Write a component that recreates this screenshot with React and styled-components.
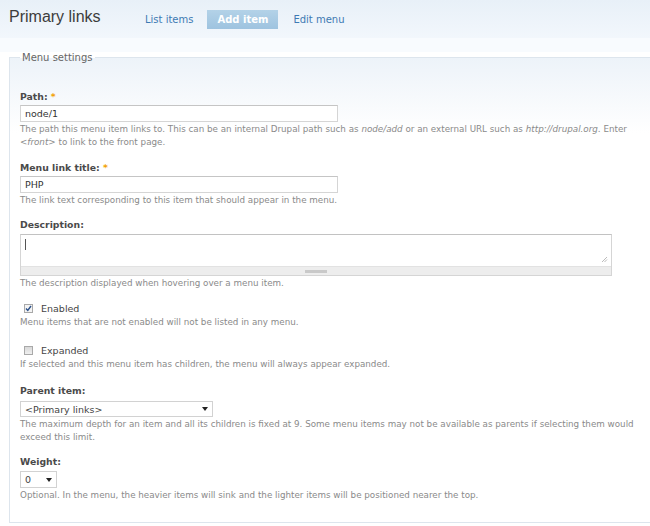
import React from "react";
import styled, { createGlobalStyle } from "styled-components";

const Global = createGlobalStyle`
  html, body { margin: 0; padding: 0; background: #fff; }
  body { font-family: "DejaVu Sans", Verdana, sans-serif; color: #444; overflow: hidden; }
`;

const Page = styled.div`
  width: 650px;
  height: 526px;
  overflow: hidden;
  background: #fff;
`;

const Header = styled.div`
  height: 38px;
  display: flex;
  align-items: center;
  padding-left: 9px;
  background: linear-gradient(#e8f0f8, #f2f7fc);
  box-sizing: border-box;
`;

const Title = styled.h1`
  margin: 0 0 4px 0;
  font-family: "Liberation Sans", Arial, sans-serif;
  font-weight: normal;
  font-size: 16px;
  color: #3c3c3c;
  width: 128px;
`;

const Tabs = styled.div`
  display: flex;
  align-items: center;
`;

const Tab = styled.a`
  display: inline-flex;
  align-items: center;
  height: 19px;
  padding: 0 ${(p) => (p.$active ? 10 : 8)}px;
  font-size: 10px;
  text-decoration: none;
  color: ${(p) => (p.$active ? "#fff" : "#3e7ab3")};
  font-weight: ${(p) => (p.$active ? "bold" : "normal")};
  background: ${(p) => (p.$active ? "linear-gradient(#b3d2e8, #9ec3df)" : "transparent")};
  margin-left: ${(p) => p.$ml || 0}px;
`;

const Band = styled.div`
  height: 14px;
  background: #f8fbfe;
`;

const Fieldset = styled.fieldset`
  margin: 0 0 0 9px;
  padding: 27px 10px 20px 10px;
  border: 1px solid #dde5ed;
  border-right: none;
  width: 700px;
  box-sizing: border-box;
  background: linear-gradient(#edf3f9 0px, #ffffff 75px);
`;

const Legend = styled.legend`
  padding: 0 2px;
  font-size: 10px;
  color: #666;
`;

const Item = styled.div`
  margin-top: ${(p) => p.$mt ?? 12}px;
`;

const Label = styled.div`
  font-size: 9.3px;
  font-weight: bold;
  color: #4a4a4a;
  line-height: 14px;
  margin-bottom: ${(p) => p.$mb ?? 1}px;
`;

const Star = styled.span`
  color: #f2a100;
`;

const TextInput = styled.div`
  width: 318px;
  height: 17px;
  box-sizing: border-box;
  border: 1px solid #d5d5d5;
  border-top-color: #c5c5c5;
  background: #fff;
  font-size: 9.5px;
  line-height: 15px;
  padding-left: 4px;
  color: #333;
`;

const Desc = styled.div`
  font-size: 8.75px;
  line-height: 13px;
  color: #8a8a8a;
  margin-top: 1px;
  width: 622px;
  em { font-style: italic; }
`;

const TextArea = styled.div`
  width: 592px;
  box-sizing: border-box;
  border: 1px solid #d5d5d5;
  border-top-color: #c2c2c2;
  background: #fff;
`;

const TextAreaBody = styled.div`
  height: 31px;
  position: relative;
  padding: 4px 0 0 4px;
  box-sizing: border-box;
`;

const Caret = styled.div`
  width: 1px;
  height: 11px;
  background: #555;
`;

const Corner = styled.svg`
  position: absolute;
  right: 3px;
  bottom: 3px;
`;

const Grip = styled.div`
  height: 8px;
  background: #ededed;
  border-top: 1px solid #e2e2e2;
  display: flex;
  align-items: center;
  justify-content: center;
`;

const GripHandle = styled.div`
  width: 22px;
  height: 3px;
  background: #c9c9c9;
`;

const CheckRow = styled.div`
  display: flex;
  align-items: center;
  height: 14px;
  padding-left: 4px;
`;

const Box = styled.span`
  width: 9px;
  height: 9px;
  box-sizing: border-box;
  border: 1px solid #a9a9a9;
  background: ${(p) => (p.$checked ? "#f4f4f4" : "linear-gradient(#d8d8d8, #f0f0f0)")};
  display: inline-flex;
  align-items: center;
  justify-content: center;
  margin-right: 8px;
`;

const CheckLabel = styled.span`
  font-size: 9.5px;
  color: #444;
`;

const Select = styled.div`
  width: ${(p) => p.$w}px;
  height: ${(p) => p.$h}px;
  box-sizing: border-box;
  border: 1px solid #d2d2d2;
  background: #fff;
  display: flex;
  align-items: center;
  justify-content: space-between;
  padding: 0 4px 0 4px;
  font-size: 9.5px;
  color: #444;
`;

const Arrow = styled.span`
  width: 0;
  height: 0;
  border-left: 3px solid transparent;
  border-right: 3px solid transparent;
  border-top: 4px solid #222;
`;

export default function App() {
  return (
    <Page>
      <Global />
      <Header>
        <Title>Primary links</Title>
        <Tabs>
          <Tab href="#">List items</Tab>
          <Tab href="#" $active $ml={6}>Add item</Tab>
          <Tab href="#" $ml={7}>Edit menu</Tab>
        </Tabs>
      </Header>
      <Band />
      <Fieldset>
        <Legend>Menu settings</Legend>
        <Item $mt={0}>
          <Label>Path: <Star>*</Star></Label>
          <TextInput>node/1</TextInput>
          <Desc>
            The path this menu item links to. This can be an internal Drupal path such as <em>node/add</em> or an external URL such as <em>http://drupal.org</em>. Enter <em>&lt;front&gt;</em> to link to the front page.
          </Desc>
        </Item>
        <Item>
          <Label>Menu link title: <Star>*</Star></Label>
          <TextInput>PHP</TextInput>
          <Desc>The link text corresponding to this item that should appear in the menu.</Desc>
        </Item>
        <Item $mt={11}>
          <Label $mb={2}>Description:</Label>
          <TextArea>
            <TextAreaBody>
              <Caret />
              <Corner width="7" height="7" viewBox="0 0 7 7">
                <path d="M6 1 L1 6 M6 3.5 L3.5 6" stroke="#bbb" strokeWidth="1" />
              </Corner>
            </TextAreaBody>
            <Grip><GripHandle /></Grip>
          </TextArea>
          <Desc>The description displayed when hovering over a menu item.</Desc>
        </Item>
        <Item $mt={11}>
          <CheckRow>
            <Box $checked>
              <svg width="7" height="7" viewBox="0 0 7 7">
                <path d="M1 3.5 L2.8 5.5 L6 1" stroke="#2a4f88" strokeWidth="1.4" fill="none" />
              </svg>
            </Box>
            <CheckLabel>Enabled</CheckLabel>
          </CheckRow>
          <Desc>Menu items that are not enabled will not be listed in any menu.</Desc>
        </Item>
        <Item $mt={14}>
          <CheckRow>
            <Box />
            <CheckLabel>Expanded</CheckLabel>
          </CheckRow>
          <Desc>If selected and this menu item has children, the menu will always appear expanded.</Desc>
        </Item>
        <Item $mt={13}>
          <Label $mb={3}>Parent item:</Label>
          <Select $w={193} $h={16}>
            <span>&lt;Primary links&gt;</span>
            <Arrow />
          </Select>
          <Desc>The maximum depth for an item and all its children is fixed at 9. Some menu items may not be available as parents if selecting them would exceed this limit.</Desc>
        </Item>
        <Item $mt={11}>
          <Label $mb={2}>Weight:</Label>
          <Select $w={37} $h={17}>
            <span>0</span>
            <Arrow />
          </Select>
          <Desc>Optional. In the menu, the heavier items will sink and the lighter items will be positioned nearer the top.</Desc>
        </Item>
      </Fieldset>
    </Page>
  );
}
